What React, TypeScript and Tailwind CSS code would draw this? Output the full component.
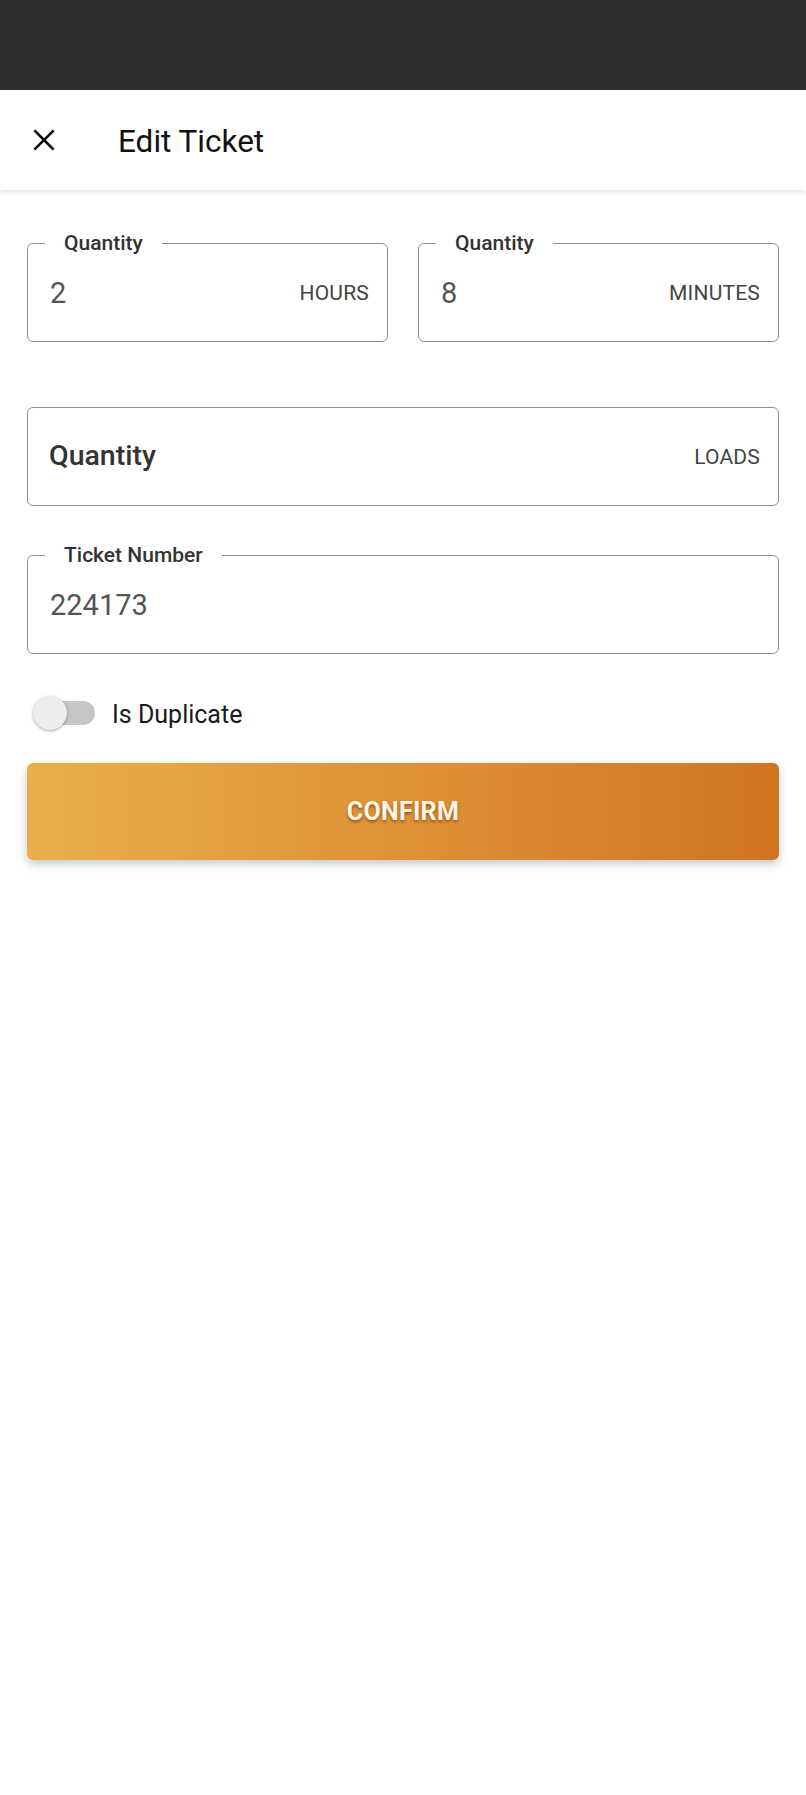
import React, { useState } from 'react';

interface FieldProps {
  label?: string;
  value: string;
  unit?: string;
  placeholder?: boolean;
}

const OutlinedField: React.FC<FieldProps> = ({ label, value, unit, placeholder }) => {
  return (
    <div className="relative h-[99px] rounded-[6px] border-[1.5px] border-[#8f8f8f] flex items-center justify-between pt-[3px] pl-[22px] pr-[18px]">
      {label && (
        <span className="absolute left-[17px] top-[-15px] bg-white px-[19px] text-[21px] leading-[28px] font-medium text-[#333]">
          {label}
        </span>
      )}
      {placeholder ? (
        <span className="text-[28.5px] font-medium text-[#333] -mt-[3px] -ml-[1px]">{value}</span>
      ) : (
        <span className="text-[29px] text-[#555]">{value}</span>
      )}
      {unit && <span className="text-[21px] text-[#444] tracking-[0.2px]">{unit}</span>}
    </div>
  );
};

const App: React.FC = () => {
  const [isDuplicate, setIsDuplicate] = useState(false);

  return (
    <div className="min-h-[1795px] bg-white font-['Roboto','Noto_Sans',sans-serif]">
      <div className="h-[90px] bg-[#2f2f2f]" />
      <header className="h-[100px] bg-white flex items-center shadow-[0_2px_5px_rgba(0,0,0,0.12)] relative z-10">
        <button className="ml-[28px] w-[32px] h-[32px] flex items-center justify-center">
          <svg width="30" height="30" viewBox="0 0 24 24" fill="none" stroke="#111" strokeWidth="2.1" strokeLinecap="square">
            <path d="M5 5 L19 19 M19 5 L5 19" />
          </svg>
        </button>
        <h1 className="ml-[58px] mt-[4px] text-[31.5px] text-[#111]">Edit Ticket</h1>
      </header>

      <main className="px-[27px] pt-[53px]">
        <div className="grid grid-cols-2 gap-[30px]">
          <OutlinedField label="Quantity" value="2" unit="HOURS" />
          <OutlinedField label="Quantity" value="8" unit="MINUTES" />
        </div>

        <div className="mt-[65px]">
          <OutlinedField value="Quantity" unit="LOADS" placeholder />
        </div>

        <div className="mt-[49px]">
          <OutlinedField label="Ticket Number" value="224173" />
        </div>

        <div className="mt-[43px] flex items-center h-[32px]">
          <button
            onClick={() => setIsDuplicate(!isDuplicate)}
            className="relative w-[62px] h-[32px] ml-[6px] flex items-center"
          >
            <span className="absolute left-[4px] right-0 h-[24px] rounded-full bg-[#c6c6c6]" />
            <span className="absolute left-0 w-[34px] h-[34px] rounded-full bg-[#ededed] shadow-[0_1px_3px_rgba(0,0,0,0.35)]" />
          </button>
          <span className="ml-[17px] mt-[3px] text-[25px] text-[#1a1a1a]">Is Duplicate</span>
        </div>

        <button className="mt-[34px] w-full h-[97px] rounded-[6px] bg-gradient-to-r from-[#eaaf4a] to-[#d17420] shadow-[0_4px_10px_rgba(0,0,0,0.22)] flex items-center justify-center">
          <span className="text-[25px] font-bold text-[#fdf4e6] tracking-[0.3px] [text-shadow:0_2px_3px_rgba(90,40,0,0.55)]">
            CONFIRM
          </span>
        </button>
      </main>
    </div>
  );
};

export default App;
